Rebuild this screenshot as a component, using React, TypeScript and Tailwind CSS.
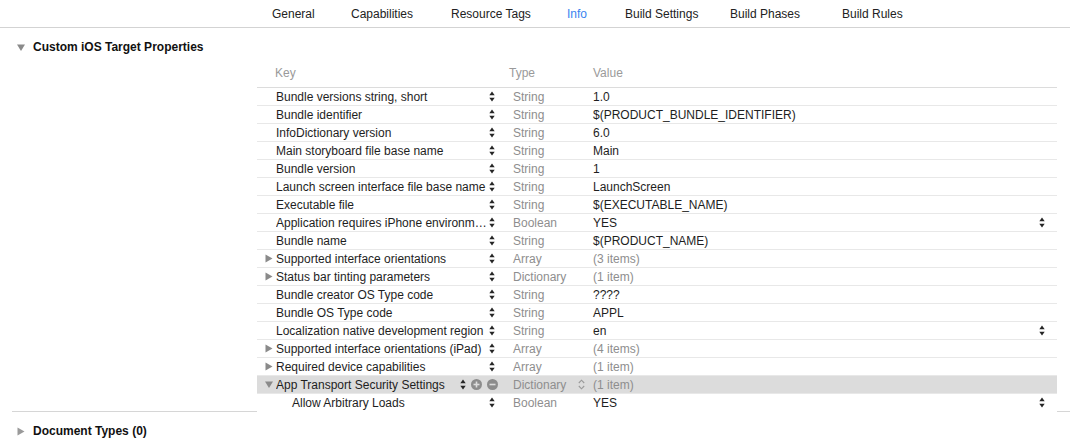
import React from "react";

type Row = {
  key: string;
  type: string;
  value: string;
  disclosure?: "right" | "down";
  indent?: boolean;
  valueStepper?: boolean;
  muted?: boolean;
  selected?: boolean;
};

const tabs = [
  { label: "General", w: "w-[79px]" },
  { label: "Capabilities", w: "w-[100px]" },
  { label: "Resource Tags", w: "w-[116px]" },
  { label: "Info", w: "w-[58px]", active: true },
  { label: "Build Settings", w: "w-[105px]" },
  { label: "Build Phases", w: "w-[112px]" },
  { label: "Build Rules", w: "w-[80px]" },
];

const rows: Row[] = [
  { key: "Bundle versions string, short", type: "String", value: "1.0" },
  { key: "Bundle identifier", type: "String", value: "$(PRODUCT_BUNDLE_IDENTIFIER)" },
  { key: "InfoDictionary version", type: "String", value: "6.0" },
  { key: "Main storyboard file base name", type: "String", value: "Main" },
  { key: "Bundle version", type: "String", value: "1" },
  { key: "Launch screen interface file base name", type: "String", value: "LaunchScreen" },
  { key: "Executable file", type: "String", value: "$(EXECUTABLE_NAME)" },
  { key: "Application requires iPhone environm…", type: "Boolean", value: "YES", valueStepper: true },
  { key: "Bundle name", type: "String", value: "$(PRODUCT_NAME)" },
  { key: "Supported interface orientations", type: "Array", value: "(3 items)", disclosure: "right", muted: true },
  { key: "Status bar tinting parameters", type: "Dictionary", value: "(1 item)", disclosure: "right", muted: true },
  { key: "Bundle creator OS Type code", type: "String", value: "????" },
  { key: "Bundle OS Type code", type: "String", value: "APPL" },
  { key: "Localization native development region", type: "String", value: "en", valueStepper: true },
  { key: "Supported interface orientations (iPad)", type: "Array", value: "(4 items)", disclosure: "right", muted: true },
  { key: "Required device capabilities", type: "Array", value: "(1 item)", disclosure: "right", muted: true },
  { key: "App Transport Security Settings", type: "Dictionary", value: "(1 item)", disclosure: "down", muted: true, selected: true },
  { key: "Allow Arbitrary Loads", type: "Boolean", value: "YES", indent: true, valueStepper: true },
];

function Stepper() {
  return (
    <svg width="6" height="11" viewBox="0 0 6 11" className="shrink-0">
      <polygon points="0.3,4.3 3,0.6 5.7,4.3" fill="#262626" />
      <polygon points="0.3,6.7 3,10.4 5.7,6.7" fill="#262626" />
    </svg>
  );
}

function Triangle({ dir, color = "#8a8a8a" }: { dir: "right" | "down"; color?: string }) {
  return (
    <svg width="8" height="9" viewBox="0 0 8 9" className="shrink-0">
      {dir === "right" ? (
        <polygon points="0.5,0.5 7.5,4.5 0.5,8.5" fill={color} />
      ) : (
        <polygon points="0,1.5 8,1.5 4,8" fill={color} />
      )}
    </svg>
  );
}

function CircleButton({ minus }: { minus?: boolean }) {
  return (
    <svg width="11" height="11" viewBox="0 0 11 11" className="shrink-0">
      <circle cx="5.5" cy="5.5" r="5.5" fill="#8c8c8c" />
      <rect x="2.5" y="4.7" width="6" height="1.6" fill="#dcdcdc" />
      {!minus && <rect x="4.7" y="2.5" width="1.6" height="6" fill="#dcdcdc" />}
    </svg>
  );
}

function PopupChevrons() {
  return (
    <svg width="7" height="11" viewBox="0 0 7 11" className="shrink-0">
      <polyline points="0.8,4 3.5,1.2 6.2,4" fill="none" stroke="#9a9a9a" strokeWidth="1.1" />
      <polyline points="0.8,7 3.5,9.8 6.2,7" fill="none" stroke="#9a9a9a" strokeWidth="1.1" />
    </svg>
  );
}

function PlistRow({ row, last }: { row: Row; last: boolean }) {
  return (
    <div
      className={`flex items-center ${last ? "h-[17px]" : "h-[18px] border-b border-[#e8e8e8]"} ${
        row.selected ? "bg-[#dcdcdc]" : ""
      }`}
    >
      {/* Key */}
      <div className="flex h-full w-[248px] items-center pl-[8px] pr-[10px]">
        <div className="flex w-[11px] items-center">{row.disclosure && <Triangle dir={row.disclosure} />}</div>
        <span className={`flex-1 truncate text-[#1e1e1e] ${row.indent ? "pl-[16px]" : ""}`}>{row.key}</span>
        {row.selected ? (
          <div className="-mr-[3px] flex items-center gap-[5px]">
            <Stepper />
            <CircleButton />
            <CircleButton minus />
          </div>
        ) : (
          <Stepper />
        )}
      </div>

      {/* Type */}
      <div className="flex h-full w-[83px] items-center pl-[8px] pr-[3px] text-[#8e8e8e]">
        <span className="flex-1">{row.type}</span>
        {row.selected && <PopupChevrons />}
      </div>

      {/* Value */}
      <div className="flex h-full flex-1 items-center pl-[5px] pr-[12px]">
        <span className={`flex-1 ${row.muted ? "text-[#8e8e8e]" : "text-[#1e1e1e]"}`}>{row.value}</span>
        {row.valueStepper && <Stepper />}
      </div>
    </div>
  );
}

export default function App() {
  return (
    <div
      className="h-[445px] w-[1070px] overflow-hidden bg-white text-[12px] leading-[14px] text-[#1e1e1e]"
      style={{ fontFamily: '"Liberation Sans", Arial, sans-serif' }}
    >
      {/* Tab bar */}
      <div className="flex h-[28px] items-center border-b border-[#d3d3d3] pl-[272px]">
        {tabs.map((t) => (
          <span key={t.label} className={`${t.w} shrink-0 ${t.active ? "text-[#3a84f0]" : "text-[#222]"}`}>
            {t.label}
          </span>
        ))}
      </div>

      {/* Section header */}
      <div className="flex h-[38px] items-center gap-[8px] pl-[17px]">
        <Triangle dir="down" />
        <span className="font-bold text-[#111]">Custom iOS Target Properties</span>
      </div>

      {/* Property list */}
      <div className="ml-[257px] w-[800px]">
        <div className="flex h-[22px] border-b border-[#dcdcdc] text-[#9a9a9a]">
          <span className="w-[248px] pl-[18px]">Key</span>
          <span className="w-[83px] pl-[4px]">Type</span>
          <span className="pl-[5px]">Value</span>
        </div>
        {rows.map((r, i) => (
          <PlistRow key={r.key} row={r} last={i === rows.length - 1} />
        ))}
      </div>

      {/* Separator */}
      <div className="flex h-px">
        <div className="ml-[12px] w-[245px] bg-[#d6d6d6]" />
        <div className="w-[800px]" />
        <div className="flex-1 bg-[#d6d6d6]" />
      </div>

      {/* Collapsed section */}
      <div className="flex h-[38px] items-center gap-[8px] pl-[17px]">
        <Triangle dir="right" color="#9a9a9a" />
        <span className="font-bold text-[#111]">Document Types (0)</span>
      </div>
    </div>
  );
}
